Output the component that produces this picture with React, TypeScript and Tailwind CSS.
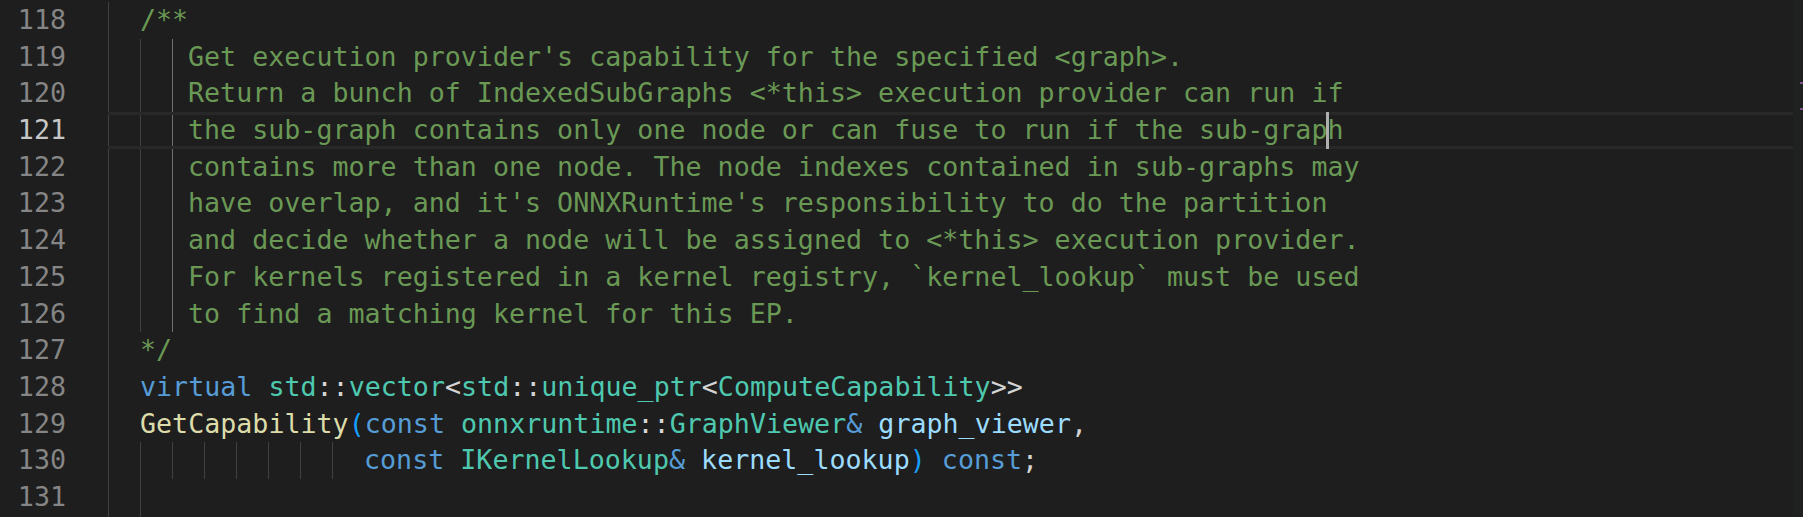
import React from "react";

type Tok = [string, string];

const C = {
  comment: "text-[#6a9955]",
  kw: "text-[#569cd6]",
  type: "text-[#4ec9b0]",
  fn: "text-[#dcdcaa]",
  vr: "text-[#9cdcfe]",
  punc: "text-[#d4d4d4]",
  brk: "text-[#179fff]",
};

// indent guide cells: width + guide colour
type Cell = { w: string; c: string };
const G2: Cell = { w: "w-[32px]", c: "border-[#404040]" };
const ACTIVE1: Cell = { w: "w-[16px]", c: "border-[#707070]" };

type Line = { num: number; indent: Cell[]; toks: Tok[]; current?: boolean };

const commentIndent = [G2, G2, ACTIVE1];

const lines: Line[] = [
  { num: 118, indent: [G2], toks: [["/**", C.comment]] },
  { num: 119, indent: commentIndent, toks: [["Get execution provider's capability for the specified <graph>.", C.comment]] },
  { num: 120, indent: commentIndent, toks: [["Return a bunch of IndexedSubGraphs <*this> execution provider can run if", C.comment]] },
  { num: 121, indent: commentIndent, current: true, toks: [["the sub-graph contains only one node or can fuse to run if the sub-grap", C.comment]] },
  { num: 122, indent: commentIndent, toks: [["contains more than one node. The node indexes contained in sub-graphs may", C.comment]] },
  { num: 123, indent: commentIndent, toks: [["have overlap, and it's ONNXRuntime's responsibility to do the partition", C.comment]] },
  { num: 124, indent: commentIndent, toks: [["and decide whether a node will be assigned to <*this> execution provider.", C.comment]] },
  { num: 125, indent: commentIndent, toks: [["For kernels registered in a kernel registry, `kernel_lookup` must be used", C.comment]] },
  { num: 126, indent: commentIndent, toks: [["to find a matching kernel for this EP.", C.comment]] },
  { num: 127, indent: [G2], toks: [["*/", C.comment]] },
  {
    num: 128,
    indent: [G2],
    toks: [
      ["virtual", C.kw],
      [" ", C.punc],
      ["std", C.type],
      ["::", C.punc],
      ["vector", C.type],
      ["<", C.punc],
      ["std", C.type],
      ["::", C.punc],
      ["unique_ptr", C.type],
      ["<", C.punc],
      ["ComputeCapability", C.type],
      [">>", C.punc],
    ],
  },
  {
    num: 129,
    indent: [G2],
    toks: [
      ["GetCapability", C.fn],
      ["(", C.brk],
      ["const", C.kw],
      [" ", C.punc],
      ["onnxruntime", C.type],
      ["::", C.punc],
      ["GraphViewer", C.type],
      ["&", C.kw],
      [" ", C.punc],
      ["graph_viewer", C.vr],
      [",", C.punc],
    ],
  },
  {
    num: 130,
    indent: [G2, G2, G2, G2, G2, G2, G2, G2],
    toks: [
      ["const", C.kw],
      [" ", C.punc],
      ["IKernelLookup", C.type],
      ["&", C.kw],
      [" ", C.punc],
      ["kernel_lookup", C.vr],
      [")", C.brk],
      [" ", C.punc],
      ["const", C.kw],
      [";", C.punc],
    ],
  },
  { num: 131, indent: [G2, G2], toks: [] },
];

export default function App() {
  return (
    <div
      className="w-[1803px] h-[517px] overflow-hidden bg-[#1e1e1e] flex text-[26.67px] leading-[36.7px]"
      style={{ fontFamily: '"DejaVu Sans Mono", "Liberation Mono", monospace' }}
    >
      {/* gutter */}
      <div className="w-[108px] shrink-0 pt-[2px]">
        {lines.map((l) => (
          <div
            key={l.num}
            className={`h-[36.7px] text-right pr-[42px] ${
              l.current ? "text-[#c6c6c6]" : "text-[#858585]"
            }`}
          >
            {l.num}
          </div>
        ))}
      </div>

      {/* editor */}
      <div className="flex-1 pt-[2px]">
        {lines.map((l) => (
          <div key={l.num} className="relative flex h-[36.7px] whitespace-pre">
            {l.current && (
              <div className="absolute inset-0 border-y-[3px] border-[#282828]" />
            )}
            {l.indent.map((cell, i) => (
              <div key={i} className={`shrink-0 h-full border-l ${cell.w} ${cell.c}`} />
            ))}
            <span className="relative">
              {l.toks.map((t, i) => (
                <span key={i} className={t[1]}>
                  {t[0]}
                </span>
              ))}
              {l.current && (
                <>
                  <span className="relative inline-block w-0 h-[36.7px] align-top">
                    <span className="absolute top-0 -left-px w-[3px] h-full bg-[#aeafad]" />
                  </span>
                  <span className={C.comment}>h</span>
                </>
              )}
            </span>
          </div>
        ))}
        {/* trailing guide below last line */}
        <div className="flex h-[10px]">
          <div className="w-[32px] h-full border-l border-[#404040]" />
          <div className="w-[32px] h-full border-l border-[#404040]" />
        </div>
      </div>

      {/* overview ruler */}
      <div className="w-[10px] shrink-0 bg-[#1f2121] flex flex-col items-end pt-[82px] gap-[24px]">
        <div className="w-[3px] h-[2px] bg-[#7a4f8a]" />
        <div className="w-[3px] h-[2px] bg-[#7a4f8a]" />
      </div>
    </div>
  );
}
